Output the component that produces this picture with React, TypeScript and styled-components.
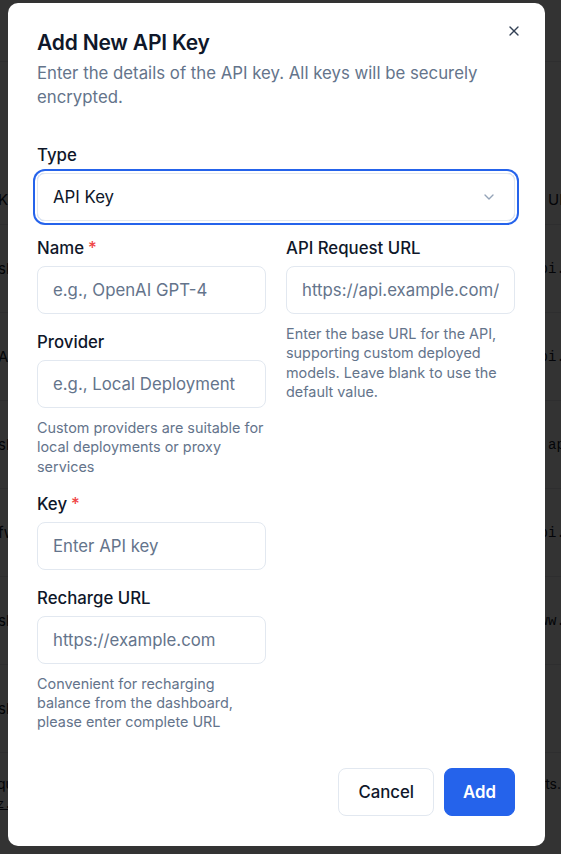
import React from "react";
import styled, { createGlobalStyle } from "styled-components";
import { X, ChevronDown } from "lucide-react";

const GlobalStyle = createGlobalStyle`
  * { box-sizing: border-box; }
  html, body { margin: 0; padding: 0; }
  body {
    font-family: Inter, "Noto Sans", "Liberation Sans", sans-serif;
    background: #ffffff;
    color: #0f172a;
    -webkit-font-smoothing: antialiased;
  }
`;

/* ---------- background page ---------- */
const Page = styled.div`
  width: 561px;
  height: 854px;
  overflow: hidden;
  display: flex;
  flex-direction: column;
`;

const TopBar = styled.div`
  height: 62px;
  border-bottom: 1px solid #e5e7eb;
  flex-shrink: 0;
`;

const Table = styled.div`
  margin-top: 113px;
  margin-left: -2px;
  display: flex;
  flex-direction: column;
`;

const Row = styled.div<{ $head?: boolean }>`
  height: ${(p) => (p.$head ? "50px" : "88px")};
  display: grid;
  grid-template-columns: 466px 200px;
  align-items: center;
  border-bottom: 1px solid #e5e7eb;
  font-size: 15px;
  color: #0f172a;
`;

const Mono = styled.span`
  font-family: "Liberation Mono", monospace;
  font-size: 14px;
  white-space: nowrap;
`;

const Cell = styled.span<{ $indent?: number }>`
  white-space: nowrap;
  padding-left: ${(p) => p.$indent ?? 0}px;
`;

const Footer = styled.div`
  margin-top: 22px;
  margin-left: -3px;
  margin-right: 0;
  display: flex;
  justify-content: space-between;
  align-items: flex-start;
  font-size: 14px;
  color: #0f172a;
`;

const FooterLeft = styled.div`
  display: flex;
  flex-direction: column;
  gap: 6px;
`;

const FooterRight = styled.span`
  white-space: nowrap;
`;

const Small = styled.span`
  font-family: "Liberation Mono", monospace;
  font-size: 12px;
  text-decoration: underline;
`;

/* ---------- overlay + dialog ---------- */
const Overlay = styled.div`
  position: fixed;
  inset: 0;
  background: rgba(0, 0, 0, 0.8);
  display: flex;
  align-items: flex-start;
  padding: 3px 0 0 8px;
`;

const Dialog = styled.div`
  position: relative;
  width: 537px;
  background: #ffffff;
  border-radius: 10px;
  padding: 26px 30px 30px 29px;
  display: flex;
  flex-direction: column;
`;

const CloseButton = styled.button`
  position: absolute;
  top: 20px;
  right: 23px;
  width: 16px;
  height: 16px;
  padding: 0;
  border: none;
  background: transparent;
  color: #334155;
  display: flex;
  align-items: center;
  justify-content: center;
  cursor: pointer;
`;

const Title = styled.h2`
  margin: 0;
  font-size: 21px;
  line-height: 28px;
  font-weight: 600;
  letter-spacing: -0.2px;
  color: #0f172a;
`;

const Description = styled.p`
  margin: 4px 0 0;
  font-size: 16.8px;
  line-height: 24px;
  color: #64748b;
`;

const Form = styled.div`
  margin-top: 34px;
  display: flex;
  flex-direction: column;
  gap: 15px;
`;

const Grid = styled.div`
  display: grid;
  grid-template-columns: 1fr 1fr;
  column-gap: 20px;
  align-items: start;
`;

const Column = styled.div`
  display: flex;
  flex-direction: column;
  gap: 16px;
`;

const Field = styled.div`
  display: flex;
  flex-direction: column;
`;

const Label = styled.label`
  font-size: 16.8px;
  line-height: 24px;
  font-weight: 500;
  color: #0f172a;
  margin-bottom: 6px;
`;

const Required = styled.span`
  color: #ef4444;
  margin-left: 4px;
`;

const Input = styled.input`
  width: 100%;
  height: 48px;
  border: 1px solid #e2e8f0;
  border-radius: 8px;
  padding: 0 15px;
  font-family: inherit;
  font-size: 16.8px;
  color: #0f172a;
  background: #ffffff;
  outline: none;
  &::placeholder {
    color: #64748b;
  }
`;

const SelectBox = styled.div`
  height: 48px;
  border: 1px solid #e2e8f0;
  border-radius: 8px;
  padding: 0 15px;
  display: flex;
  align-items: center;
  justify-content: space-between;
  font-size: 16.8px;
  color: #0f172a;
  box-shadow: 0 0 0 2px #ffffff, 0 0 0 4px #2563eb;
`;

const Chevron = styled.span`
  display: flex;
  color: #94a3b8;
  margin-right: 2px;
`;

const Help = styled.p`
  margin: 10px 0 0;
  font-size: 14.4px;
  line-height: 19.3px;
  color: #64748b;
`;

const Actions = styled.div`
  margin-top: 36px;
  display: flex;
  justify-content: flex-end;
  gap: 10px;
`;

const Button = styled.button<{ $primary?: boolean }>`
  height: 48px;
  padding: 0 ${(p) => (p.$primary ? "18px" : "19px")};
  border-radius: 8px;
  font-family: inherit;
  font-size: 16.8px;
  font-weight: ${(p) => (p.$primary ? 600 : 500)};
  border: 1px solid ${(p) => (p.$primary ? "#2563eb" : "#e2e8f0")};
  background: ${(p) => (p.$primary ? "#2563eb" : "#ffffff")};
  color: ${(p) => (p.$primary ? "#ffffff" : "#0f172a")};
  cursor: pointer;
`;

const rows = [
  ["sk-proj-4f8a", "https://api.openai.com/v1"],
  ["Anthropic", "https://api.anthropic.com"],
  ["sk-or-v1", "https://a.api-proxy.com"],
  ["fw-key", "https://api.mistral.ai"],
  ["sk-local", "https://www.example.com"],
  ["sk-test", ""],
];

export default function App() {
  return (
    <>
      <GlobalStyle />
      <Page>
        <TopBar />
        <Table>
          <Row $head>
            <Cell>Key</Cell>
            <Cell $indent={84}>URL</Cell>
          </Row>
          {rows.map(([a, b], i) => (
            <Row key={i}>
              <Cell>{a}</Cell>
              <Mono>{b}</Mono>
            </Row>
          ))}
        </Table>
        <Footer>
          <FooterLeft>
            <Cell>quota</Cell>
            <Small>z.ai</Small>
          </FooterLeft>
          <FooterRight>Manage all your keys and secrets.</FooterRight>
        </Footer>
      </Page>
      <Overlay>
        <Dialog role="dialog" aria-labelledby="dlg-title">
          <CloseButton aria-label="Close">
            <X size={16} strokeWidth={2} />
          </CloseButton>
          <Title id="dlg-title">Add New API Key</Title>
          <Description>
            Enter the details of the API key. All keys will be securely encrypted.
          </Description>
          <Form>
            <Field>
              <Label>Type</Label>
              <SelectBox>
                <span>API Key</span>
                <Chevron>
                  <ChevronDown size={16} strokeWidth={2} />
                </Chevron>
              </SelectBox>
            </Field>
            <Grid>
              <Column>
                <Field>
                  <Label>
                    Name<Required>*</Required>
                  </Label>
                  <Input placeholder="e.g., OpenAI GPT-4" />
                </Field>
                <Field>
                  <Label>Provider</Label>
                  <Input placeholder="e.g., Local Deployment" />
                  <Help>Custom providers are suitable for local deployments or proxy services</Help>
                </Field>
                <Field>
                  <Label>
                    Key<Required>*</Required>
                  </Label>
                  <Input placeholder="Enter API key" />
                </Field>
                <Field>
                  <Label>Recharge URL</Label>
                  <Input placeholder="https://example.com" />
                  <Help>
                    Convenient for recharging balance from the dashboard, please enter complete URL
                  </Help>
                </Field>
              </Column>
              <Column>
                <Field>
                  <Label>API Request URL</Label>
                  <Input placeholder="https://api.example.com/" />
                  <Help>
                    Enter the base URL for the API, supporting custom deployed models. Leave blank
                    to use the default value.
                  </Help>
                </Field>
              </Column>
            </Grid>
          </Form>
          <Actions>
            <Button>Cancel</Button>
            <Button $primary>Add</Button>
          </Actions>
        </Dialog>
      </Overlay>
    </>
  );
}
